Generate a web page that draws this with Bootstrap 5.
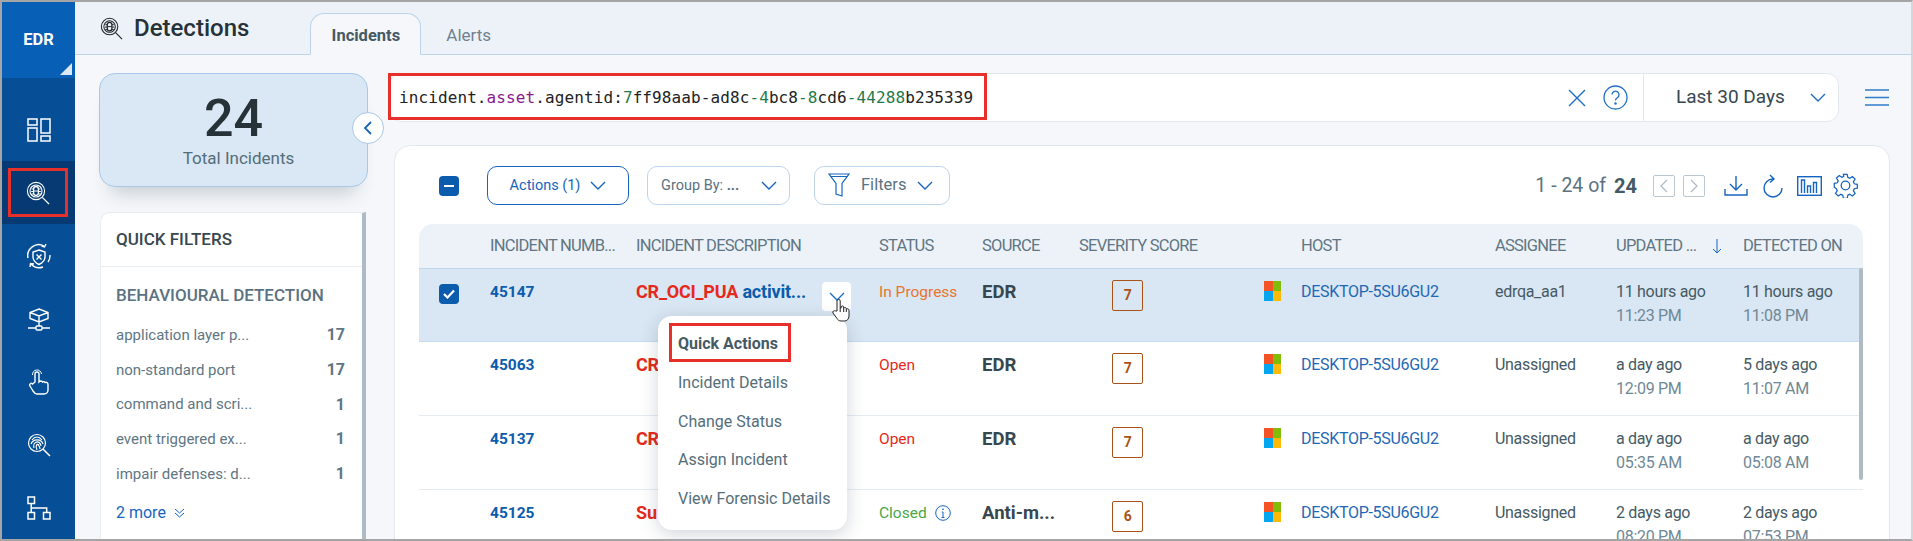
<!DOCTYPE html>
<html lang="en">
<head>
<meta charset="utf-8">
<title>Detections</title>
<link href="https://cdn.jsdelivr.net/npm/bootstrap@5.3.0/dist/css/bootstrap.min.css" rel="stylesheet">
<style>
html,body{height:541px;overflow:hidden}
body{font-family:Roboto,"Liberation Sans",sans-serif;background:#f5f7fa;color:#37474f;border:2px solid #a5a5a5;border-right-color:#d4d6d9;width:1913px}
svg{display:block;fill:none;stroke:currentColor}
.shell{height:537px;overflow:hidden}
.side{width:73px;flex:none;background:#064e96;color:#fff}
.brand{height:76px;background:#0860b6;position:relative;font-weight:700;font-size:16.5px;padding-top:26px;text-align:center}
.brand::after{content:"";position:absolute;right:3px;bottom:3px;border-style:solid;border-width:0 0 12px 12px;border-color:transparent transparent #dbe8f5 transparent}
.side-nav{padding-top:20px}
.side-item{height:63px;display:flex;align-items:center;justify-content:center;position:relative}
.side-item.on{background:#073a73}
.redbox{outline:3px solid #e8302a;outline-offset:-3px}
.side-item.on .redbox{width:60px;height:49px;display:flex;align-items:center;justify-content:center;margin-left:-1px}
.main-col{flex:1;min-width:0;height:537px}
.topbar{height:53px;flex:none;background:#edf2f9;border-bottom:1px solid #bdd4ea;padding-left:25px}
.pg-title{font-size:24px;font-weight:500;color:#263238;margin:0 0 0 11px;line-height:1;padding-bottom:1px}
.tabs-row{margin-left:61px;align-self:flex-end;margin-bottom:-1px}
.tab-on{width:111px;height:42px;background:#f5f7fa;border:1px solid #bdd4ea;border-bottom-color:#f5f7fa;border-radius:14px 14px 0 0;font-weight:700;font-size:16.5px;color:#455a64;padding-top:10px;text-align:center}
.tab-off{font-size:17px;color:#6f8290;padding:10px 0 0 25px}
.content{min-height:0;flex:1}
.left-col{width:269px;flex:none;margin:18px 0 0 24px}
.total-box{height:114px;background:#dae7f4;border:1px solid #a9c8e6;border-radius:16px;box-shadow:0 18px 18px -12px rgba(60,80,100,.25);text-align:center;position:relative;padding-top:17px}
.total-num{font-size:52px;font-weight:500;line-height:1.08;color:#263238}
.total-lbl{font-size:17px;color:#546e7a;line-height:1.4;padding-left:10px}
.toggle{position:absolute;right:-17px;top:38px;width:32px;height:32px;border-radius:50%;background:#fff;border:1px solid #a9c8e6;color:#1565c0;display:flex;align-items:center;justify-content:center;z-index:2}
.qf{margin:25px 2px 0 1px;height:340px;background:#fff;border:1px solid #e8edf2;border-right:4px solid #aebac4;border-radius:10px 0 0 0}
.qf-head{height:54px;padding:0 15px;display:flex;align-items:center;font-size:17px;font-weight:500;color:#37474f;border-bottom:1px solid #e8edf2}
.qf-body{padding:14px 15px}
.qf-group{font-size:17px;font-weight:500;color:#5b7282;line-height:28px;margin-bottom:9px}
.qf-row{height:34.7px;display:flex;justify-content:space-between;align-items:center;font-size:15px;color:#607684;padding-right:2px}
.qf-row b{font-weight:700;font-size:16px}
.qf-more{font-size:16px;color:#1565c0;margin-top:10px;display:flex;align-items:center;gap:8px}
.right-col{flex:1;min-width:0;margin:18px 21px 0 21px}
.search-row{height:49px}
.search-box{flex:1;background:#fff;border:1px solid #e3e8ee;border-radius:12px;position:relative;height:49px}
.query{font-family:"DejaVu Sans Mono","Liberation Mono",monospace;font-size:16px;letter-spacing:.1px;color:#222;padding-left:9px;flex:1;white-space:nowrap}
.query-frame{position:absolute;left:-2px;top:-1px;width:599px;height:47px}
.k{color:#8a1a8e}.n{color:#1f7a4d}
.sb-ic{color:#1e6fc4}
.range{width:195px;border-left:1px solid #e3e8ee;height:100%;font-size:19px;color:#37474f;padding-left:32px;padding-right:12px}
.burger{width:51px;flex:none;color:#2f7ccb;padding-left:26px}
.tbl-card{margin-top:23px;margin-left:5px;height:401px;background:#fff;border:1px solid #e3e8ee;border-radius:16px 16px 0 0;padding:20px 24px 0 24px;overflow:hidden}
.tb-row{height:39px;margin-bottom:19px}
.chk{width:20px;height:20px;border-radius:4px;background:#0b5cad;color:#fff;display:flex;align-items:center;justify-content:center;flex:none}
.tb-btn{height:39px;border:1px solid #bdd4ea;border-radius:10px;background:#fff;display:flex;align-items:center;font-size:14.5px;color:#5b7282;padding:0}
.tb-btn.a{width:142px;margin-left:28px;border-color:#1565c0;color:#1565c0;justify-content:center;gap:10px}
.tb-btn.g{width:143px;margin-left:18px;padding-left:13px;justify-content:space-between;padding-right:12px}
.tb-btn.f{width:136px;margin-left:24px;padding-left:13px;gap:11px;font-size:16.5px}
.bl{color:#1565c0}
.pager{font-size:19.5px;color:#5b7282;padding-right:7px}
.pager b{margin-left:8px;color:#455a64;font-size:20px}
.pbox{width:22px;height:22px;border:1px solid #bcc8d1;border-radius:2px;color:#aebac4;display:flex;align-items:center;justify-content:center}
.tbl{table-layout:fixed;width:1444px;margin:0;--bs-table-bg:transparent;border-collapse:separate;border-spacing:0}
.tbl th{background:#edf2f9;font-size:16.5px;font-weight:400;color:#607684;height:44px;padding:0;vertical-align:middle;white-space:nowrap;border:0;letter-spacing:-.75px}
.tbl th:first-child{border-radius:14px 0 0 0}.tbl th:last-child{border-radius:0 14px 0 0}
.tbl td{height:74px;padding:10.5px 0 0;vertical-align:top;font-size:16px;letter-spacing:-.3px;line-height:24px;border:0;border-bottom:1px solid #e6ebf0;color:#455a64;background:#fff}
.tbl tr.sel td{background:#d9e6f3;border-top:1px solid #c0d6ea;border-bottom:1px solid #c8dbec}
.tbl td:first-child{padding-left:20px}
.tbl td.num{font-weight:700;color:#0b5cad;letter-spacing:0;font-size:15.5px}
.tbl td.desc{font-weight:700;font-size:18px;letter-spacing:-.2px;position:relative}
.desc .r{color:#e52a1c}.desc .b{color:#0b5cad}
.tbl td.src{font-weight:700;font-size:18.5px;letter-spacing:0;color:#37474f}
.sev{width:31px;height:31px;border:1px solid #a9531a;border-radius:2px;color:#a9531a;font-weight:700;font-size:14px;margin:0 0 0 33px;display:flex;align-items:center;justify-content:center}
.win{width:17px;height:20px;display:grid;grid-template-columns:1fr 1fr;grid-template-rows:1fr 1fr;margin-top:1px}
.win i:nth-child(1){background:#f35325}.win i:nth-child(2){background:#81bc06}.win i:nth-child(3){background:#05a6f0}.win i:nth-child(4){background:#ffba08}
.tbl td.host{color:#1f68b5}
.t2{color:#6f8897}
.tbl td.st-p{color:#e8752c;letter-spacing:0;font-size:15.5px}.tbl td.st-o{color:#e52a1c;letter-spacing:0;font-size:15.5px}.tbl td.st-c{color:#4aa74a;letter-spacing:0;font-size:15.5px}
.row-act{position:absolute;left:186px;top:13px;width:29px;height:29px;background:#fff;border-radius:4px;color:#1e6fc4;display:flex;align-items:center;justify-content:center}
.hand{position:absolute;left:196px;top:29px;z-index:6;color:#222}
.qa-menu{position:absolute;left:22px;top:47px;width:189px;height:214px;display:block;border:0;border-radius:14px;padding:7px 11px;margin:0;min-width:0;box-shadow:0 4px 18px rgba(40,60,80,.22);z-index:5;background:#fff}
.qa-menu span{display:block;height:38.8px;line-height:38.8px;padding:2px 9px 0;font-size:16px;letter-spacing:0;font-weight:400;color:#546e7a;white-space:nowrap}
.qa-menu span.redbox{font-weight:700;color:#455a64;width:122px}
.tbl-scroll{position:absolute;right:0;top:44px;width:4px;height:212px;background:#aebac4;border-radius:2px}
.tbl-wrap{position:relative;width:1444px}
</style>
</head>
<body>
<svg width="0" height="0" style="position:absolute">
<defs>
<symbol id="bugglass" viewBox="0 0 24 24"><circle cx="10" cy="10" r="8.6" stroke-width="1.1"/><circle cx="10" cy="10" r="6" stroke-width="1.1"/><rect x="7.6" y="5.5" width="4.8" height="9" rx="2.4" stroke-width="1.3"/><path d="M7.5 8H5.6M7.5 10.5H5.2M7.5 13H5.6M12.5 8h1.9M12.5 10.5h2.3M12.5 13h1.9M7.7 10h4.6" stroke-width="1"/><path d="M16.3 16.3L23 23" stroke-width="1.2"/></symbol>
<symbol id="chev" viewBox="0 0 16 10"><path d="M1 1l7 7 7-7" stroke-width="1.4"/></symbol>
</defs>
</svg>
<div class="shell d-flex">
  <aside class="side">
    <div class="brand">EDR</div>
    <nav class="side-nav">
      <div class="side-item"><svg width="24" height="24" viewBox="0 0 24 24" stroke-width="1.5"><rect x="1" y="1" width="9" height="6" /><rect x="1" y="10" width="9" height="13"/><rect x="14" y="1" width="9" height="14"/><rect x="14" y="18" width="9" height="5"/></svg></div>
      <div class="side-item on"><div class="redbox"><svg width="24" height="24"><use href="#bugglass"/></svg></div></div>
      <div class="side-item"><svg width="26" height="26" viewBox="0 0 26 26" stroke-width="1.4"><path d="M13 7l6 2v5c0 4-3 6-6 7.500-3-1.500-6-3.500-6-7.500V9z"/><path d="M10.500 11.500l5 5M15.500 11.500l-5 5"/><path d="M2 15A11 11 0 0 1 18 3M20 1l-1.500 3-3-1M24 12a11 11 0 0 1-2 7M17 24a11 11 0 0 1-12-3M4 24l.5-3.500 3.500.5" /></svg></div>
      <div class="side-item"><svg width="24" height="24" viewBox="0 0 24 24" stroke-width="1.4"><path d="M12 2l9 3.500v6L12 15l-9-3.500v-6zM3 5.500L12 9l9-3.500M12 9v6M12 15v4M1 21h8M15 21h8"/><rect x="9" y="19" width="6" height="4" rx="1"/></svg></div>
      <div class="side-item"><svg width="20" height="26" viewBox="0 0 20 26" stroke-width="1.4"><path d="M6 13V5a2 2 0 0 1 4 0v8l1-1c1 0 2 0 2.500 1 1-.5 2-.5 2.500.5 1.500-.5 3 0 3 2V21c0 2-1.500 4-4 4H8c-2 0-3-1.500-4-3l-3-5c-1-2 1-3.500 2.500-2z"/><path d="M3.500 6a4.500 4.500 0 0 1 9-1" stroke-width="1"/></svg></div>
      <div class="side-item"><svg width="24" height="24" viewBox="0 0 24 24" stroke-width="1.2"><circle cx="10" cy="10" r="8.500"/><path d="M5 7c3-4 7-4 10 0M4 11c2-5 10-6 12 0M7 15c-2-6 6-9 7-2M10 17c-2-4 0-7 2-5M13 16c0-2 0-3-2-4" /><path d="M16 16l7 7" stroke-width="1.500"/></svg></div>
      <div class="side-item"><svg width="24" height="24" viewBox="0 0 24 24" stroke-width="1.5"><rect x="1" y="1" width="6.500" height="6.500"/><rect x="1" y="16.500" width="6.500" height="6.500"/><rect x="16.500" y="16.500" width="6.500" height="6.500"/><path d="M4.200 7.500v9M4.200 12h15.500v4.500"/></svg></div>
    </nav>
  </aside>
  <div class="main-col d-flex flex-column">
    <header class="topbar d-flex align-items-center">
      <svg width="23" height="23" class="text-dark"><use href="#bugglass"/></svg>
      <h1 class="pg-title">Detections</h1>
      <div class="tabs-row d-flex">
        <div class="tab-on">Incidents</div>
        <div class="tab-off">Alerts</div>
      </div>
    </header>
    <div class="content d-flex">
      <div class="left-col">
        <div class="total-box">
          <div class="total-num">24</div>
          <div class="total-lbl">Total Incidents</div>
          <div class="toggle"><svg width="10" height="16" viewBox="0 0 10 16" stroke-width="1.8"><path d="M8 2L2 8l6 6"/></svg></div>
        </div>
        <div class="qf">
          <div class="qf-head">QUICK FILTERS</div>
          <div class="qf-body">
            <div class="qf-group">BEHAVIOURAL DETECTION</div>
            <div class="qf-row"><span>application layer p...</span><b>17</b></div>
            <div class="qf-row"><span>non-standard port</span><b>17</b></div>
            <div class="qf-row"><span>command and scri...</span><b>1</b></div>
            <div class="qf-row"><span>event triggered ex...</span><b>1</b></div>
            <div class="qf-row"><span>impair defenses: d...</span><b>1</b></div>
            <div class="qf-more">2 more <svg width="11" height="10" viewBox="0 0 11 10" stroke-width="1"><path d="M1 1l4.500 4L10 1M1 5l4.500 4L10 5"/></svg></div>
          </div>
        </div>
      </div>
      <div class="right-col">
        <div class="search-row d-flex">
          <div class="search-box d-flex align-items-center">
            <div class="query-frame redbox"></div>
            <div class="query">incident.<span class="k">asset</span>.agentid:<span class="n">7</span>ff98aab-ad8c<span class="n">-4</span>bc8<span class="n">-8</span>cd6<span class="n">-44288</span>b235339</div>
            <svg class="sb-ic me-3" width="20" height="20" viewBox="0 0 20 20" stroke-width="1.4"><path d="M2 2l16 16M18 2L2 18"/></svg>
            <svg class="sb-ic" width="25" height="25" viewBox="0 0 25 25" stroke-width="1.3" style="margin-right:15px"><circle cx="12.500" cy="12.500" r="11.500"/><path d="M9 9.500a3.500 3.500 0 1 1 5.500 3c-1.300.8-2 1.300-2 3" /><circle cx="12.500" cy="18.500" r=".6"/></svg>
            <div class="range d-flex align-items-center justify-content-between"><span>Last 30 Days</span><svg class="sb-ic" width="16" height="10"><use href="#chev"/></svg></div>
          </div>
          <div class="burger d-flex align-items-center"><svg width="24" height="17" viewBox="0 0 24 17" stroke-width="1.5"><path d="M0 1h24M0 8.500h24M0 16h24"/></svg></div>
        </div>
        <section class="tbl-card">
          <div class="tb-row d-flex align-items-center">
            <div class="chk" style="margin-left:20px"><svg width="12" height="4" viewBox="0 0 12 4" stroke-width="2"><path d="M1 2h10"/></svg></div>
            <button class="tb-btn a" type="button">Actions (1) <svg width="16" height="10"><use href="#chev"/></svg></button>
            <button class="tb-btn g" type="button"><span>Group By: <b>...</b></span><svg class="bl" width="16" height="10"><use href="#chev"/></svg></button>
            <button class="tb-btn f" type="button"><svg class="bl" width="22" height="25" viewBox="0 0 22 25" stroke-width="1.2"><path d="M1 1h20l-7 9.500V23l-6-2v-10.500z"/><path d="M2.500 3.500h17"/></svg>Filters<svg class="bl" width="16" height="10"><use href="#chev"/></svg></button>
            <div class="ms-auto d-flex align-items-center pager">
              <span>1 - 24 of</span><b>24</b>
              <div class="pbox ms-3"><svg width="8" height="14" viewBox="0 0 8 14" stroke-width="1.2"><path d="M7 1L1 7l6 6"/></svg></div>
              <div class="pbox" style="margin-left:8px"><svg width="8" height="14" viewBox="0 0 8 14" stroke-width="1.2"><path d="M1 1l6 6-6 6"/></svg></div>
              <svg class="bl" style="margin-left:19px" width="24" height="21" viewBox="0 0 24 21" stroke-width="1.4"><path d="M12 1v13M6 9l6 6 6-6M1 14v6h22v-6"/></svg>
              <svg class="bl" style="margin-left:14px" width="21" height="24" viewBox="0 0 21 24" stroke-width="1.4"><path d="M11 5A9 9 0 1 0 20 14M8 1l4 4-4 3.500"/></svg>
              <svg class="bl" style="margin-left:14px" width="25" height="20" viewBox="0 0 25 20" stroke-width="1.400"><rect x=".7" y=".7" width="23.600" height="18.600"/><path d="M4.500 17V4h3v13M10.500 17v-7h3v7M16.500 17V6.500h3V17"/></svg>
              <svg class="bl" style="margin-left:11px" width="25" height="25" viewBox="0 0 25 25" stroke-width="1.300"><circle cx="12.500" cy="12.500" r="4.300"/><path d="M10.500 1h4l.6 3.200 2 .9 2.800-1.800 2.800 2.800-1.800 2.700.9 2.100 3.200.6v4l-3.200.6-.9 2 1.800 2.800-2.800 2.800-2.800-1.800-2 .9-.6 3.200h-4l-.6-3.200-2-.9-2.800 1.800-2.800-2.800 1.800-2.800-.9-2L1 14.500v-4l3.200-.6.900-2.100-1.800-2.700 2.800-2.800 2.800 1.800 2-.9z" transform="translate(.3 .3) scale(.96)"/></svg>
            </div>
          </div>
          <div class="tbl-wrap">
          <table class="table tbl">
            <colgroup><col style="width:71px"><col style="width:146px"><col style="width:243px"><col style="width:103px"><col style="width:97px"><col style="width:185px"><col style="width:37px"><col style="width:194px"><col style="width:121px"><col style="width:127px"><col style="width:120px"></colgroup>
            <thead><tr><th></th><th>INCIDENT NUMB...</th><th>INCIDENT DESCRIPTION</th><th>STATUS</th><th>SOURCE</th><th>SEVERITY SCORE</th><th></th><th>HOST</th><th>ASSIGNEE</th><th><span class="d-flex align-items-center justify-content-between" style="width:106px">UPDATED ...<svg class="bl" width="10" height="15" viewBox="0 0 10 15" stroke-width="1"><path d="M5 0v14M1 10l4 4 4-4"/></svg></span></th><th>DETECTED ON</th></tr></thead>
            <tbody>
              <tr class="sel">
                <td><div class="chk mt-1"><svg width="12" height="10" viewBox="0 0 12 10" stroke-width="2.200"><path d="M1 5l3.500 3.500L11 1.500"/></svg></div></td>
                <td class="num">45147</td>
                <td class="desc"><span class="r">CR_OCI_PUA</span> <span class="b">activit...</span>
                  <div class="row-act"><svg width="16" height="10"><use href="#chev"/></svg></div>
                  <svg class="hand" width="18" height="24" viewBox="0 0 18 24" stroke-width="1" style="fill:#fff"><path d="M5 13V3a1.600 1.600 0 0 1 3.200 0v7l1 0v-1.500c1-1 2.500-.5 2.500.5v1c1-1 2.500-.5 2.600.6v.4c1-.6 2.700-.2 2.700 1.200V18c0 3-2 5-4.500 5H9c-2 0-3-1-4-2.500L1 15c-.8-1.500 1-3 2.500-2z"/><path d="M8.200 10v4M11.700 10v4M14.300 11v3"/></svg>
                  <div class="dropdown-menu qa-menu">
                    <span class="redbox">Quick Actions</span>
                    <span>Incident Details</span>
                    <span>Change Status</span>
                    <span>Assign Incident</span>
                    <span>View Forensic Details</span>
                  </div>
                </td>
                <td class="st-p">In Progress</td><td class="src">EDR</td><td><div class="sev">7</div></td>
                <td><div class="win"><i></i><i></i><i></i><i></i></div></td><td class="host">DESKTOP-5SU6GU2</td><td>edrqa_aa1</td>
                <td>11 hours ago<br><span class="t2">11:23 PM</span></td><td>11 hours ago<br><span class="t2">11:08 PM</span></td>
              </tr>
              <tr>
                <td></td><td class="num">45063</td><td class="desc"><span class="r">CR</span></td><td class="st-o">Open</td><td class="src">EDR</td><td><div class="sev">7</div></td>
                <td><div class="win"><i></i><i></i><i></i><i></i></div></td><td class="host">DESKTOP-5SU6GU2</td><td>Unassigned</td>
                <td>a day ago<br><span class="t2">12:09 PM</span></td><td>5 days ago<br><span class="t2">11:07 AM</span></td>
              </tr>
              <tr>
                <td></td><td class="num">45137</td><td class="desc"><span class="r">CR</span></td><td class="st-o">Open</td><td class="src">EDR</td><td><div class="sev">7</div></td>
                <td><div class="win"><i></i><i></i><i></i><i></i></div></td><td class="host">DESKTOP-5SU6GU2</td><td>Unassigned</td>
                <td>a day ago<br><span class="t2">05:35 AM</span></td><td>a day ago<br><span class="t2">05:08 AM</span></td>
              </tr>
              <tr>
                <td></td><td class="num">45125</td><td class="desc"><span class="r">Su</span></td>
                <td class="st-c"><span class="d-flex align-items-center gap-2">Closed <svg class="bl" width="16" height="16" viewBox="0 0 16 16" stroke-width="1"><circle cx="8" cy="8" r="7.300"/><path d="M8 7v5M6.500 12.500h3M6.800 7H8"/><circle cx="8" cy="4.300" r=".5"/></svg></span></td>
                <td class="src">Anti-m...</td><td><div class="sev">6</div></td>
                <td><div class="win"><i></i><i></i><i></i><i></i></div></td><td class="host">DESKTOP-5SU6GU2</td><td>Unassigned</td>
                <td>2 days ago<br><span class="t2">08:20 PM</span></td><td>2 days ago<br><span class="t2">07:53 PM</span></td>
              </tr>
            </tbody>
          </table>
          <div class="tbl-scroll"></div>
          </div>
        </section>
      </div>
    </div>
  </div>
</div>
<script src="https://cdn.jsdelivr.net/npm/bootstrap@5.3.0/dist/js/bootstrap.bundle.min.js"></script>
</body>
</html>
